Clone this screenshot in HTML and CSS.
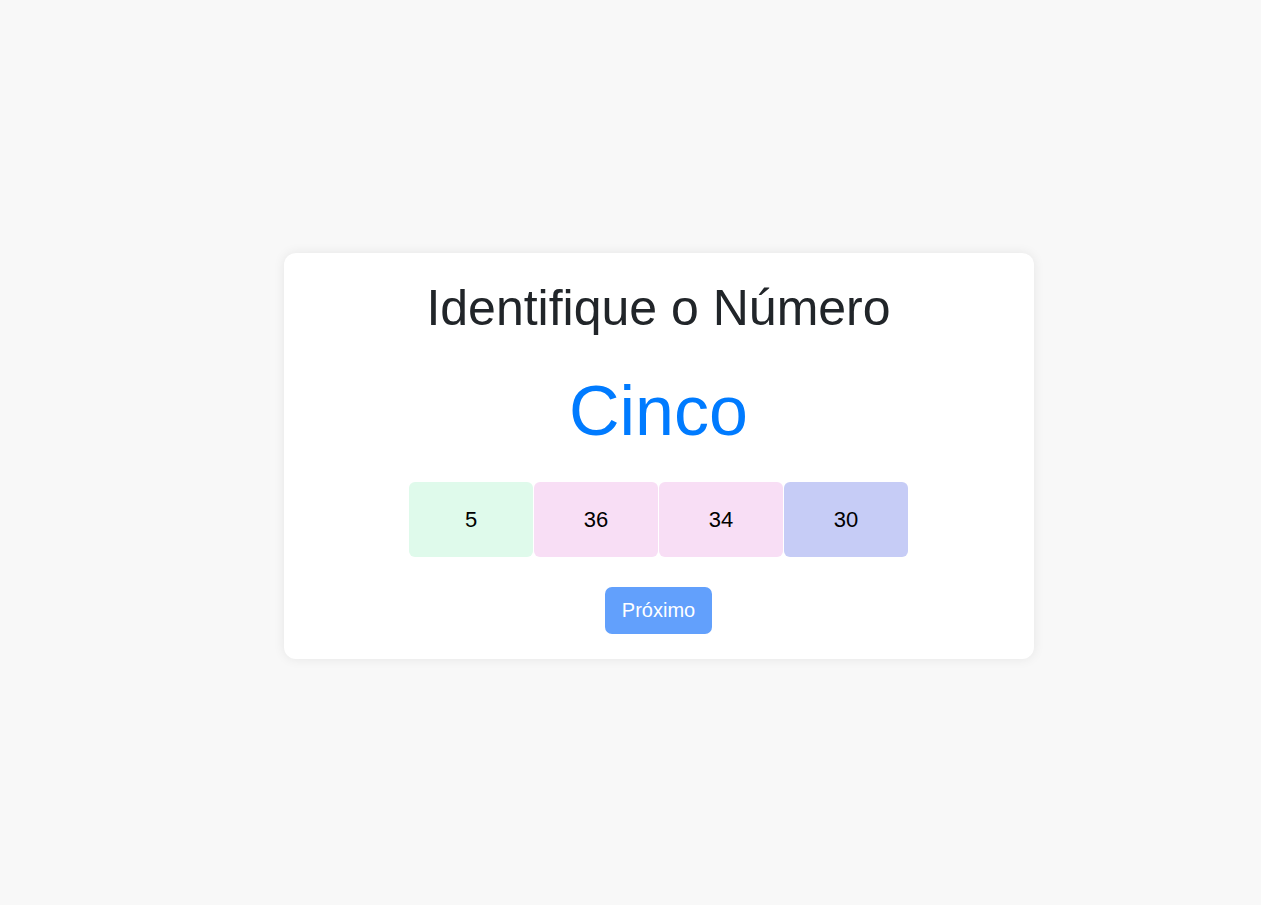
FILE: index.html
```html
<!DOCTYPE html>
<html lang="pt">
<head>
<meta charset="utf-8">
<title>Identifique o Número</title>
<link rel="stylesheet" href="styles.css">
</head>
<body>
<main class="page">
  <section class="card">
    <h1 class="title">Identifique o Número</h1>
    <div class="word">Cinco</div>
    <div class="options">
      <button class="option green">5</button>
      <button class="option pink">36</button>
      <button class="option pink">34</button>
      <button class="option lavender">30</button>
    </div>
    <button class="next">Próximo</button>
  </section>
</main>
</body>
</html>
```
FILE: styles.css
```css
html, body {
  margin: 0;
  padding: 0;
  height: 100%;
}
body {
  background: #f8f8f8;
  font-family: "Liberation Sans", Arial, sans-serif;
}
.page {
  min-height: 100%;
  display: flex;
  align-items: center;
  justify-content: center;
  padding: 7px 0 0 56px;
  box-sizing: border-box;
}
.card {
  width: 750px;
  box-sizing: border-box;
  background: #ffffff;
  border-radius: 12px;
  box-shadow: 0 0 12px rgba(0, 0, 0, 0.08);
  padding: 27px 25px 25px;
  display: flex;
  flex-direction: column;
  align-items: center;
}
.title {
  margin: 0;
  font-size: 50px;
  font-weight: 400;
  color: #212529;
  line-height: 57px;
}
.word {
  margin-top: 34px;
  font-size: 70px;
  line-height: 80px;
  color: #007bff;
}
.options {
  margin-top: 31px;
  display: flex;
  gap: 1px;
}
.option {
  width: 124px;
  height: 75px;
  border: none;
  border-radius: 6px;
  font-family: inherit;
  font-size: 22px;
  color: #000;
  display: flex;
  align-items: center;
  justify-content: center;
  padding: 0;
}
.green { background: #dffaeb; }
.pink { background: #f8def5; }
.lavender { background: #c6ccf6; }
.next {
  margin-top: 30px;
  border: none;
  border-radius: 7px;
  background: #62a0fc;
  color: #ffffff;
  font-family: inherit;
  font-size: 20px;
  line-height: 23px;
  padding: 12px 17px;
}
```
